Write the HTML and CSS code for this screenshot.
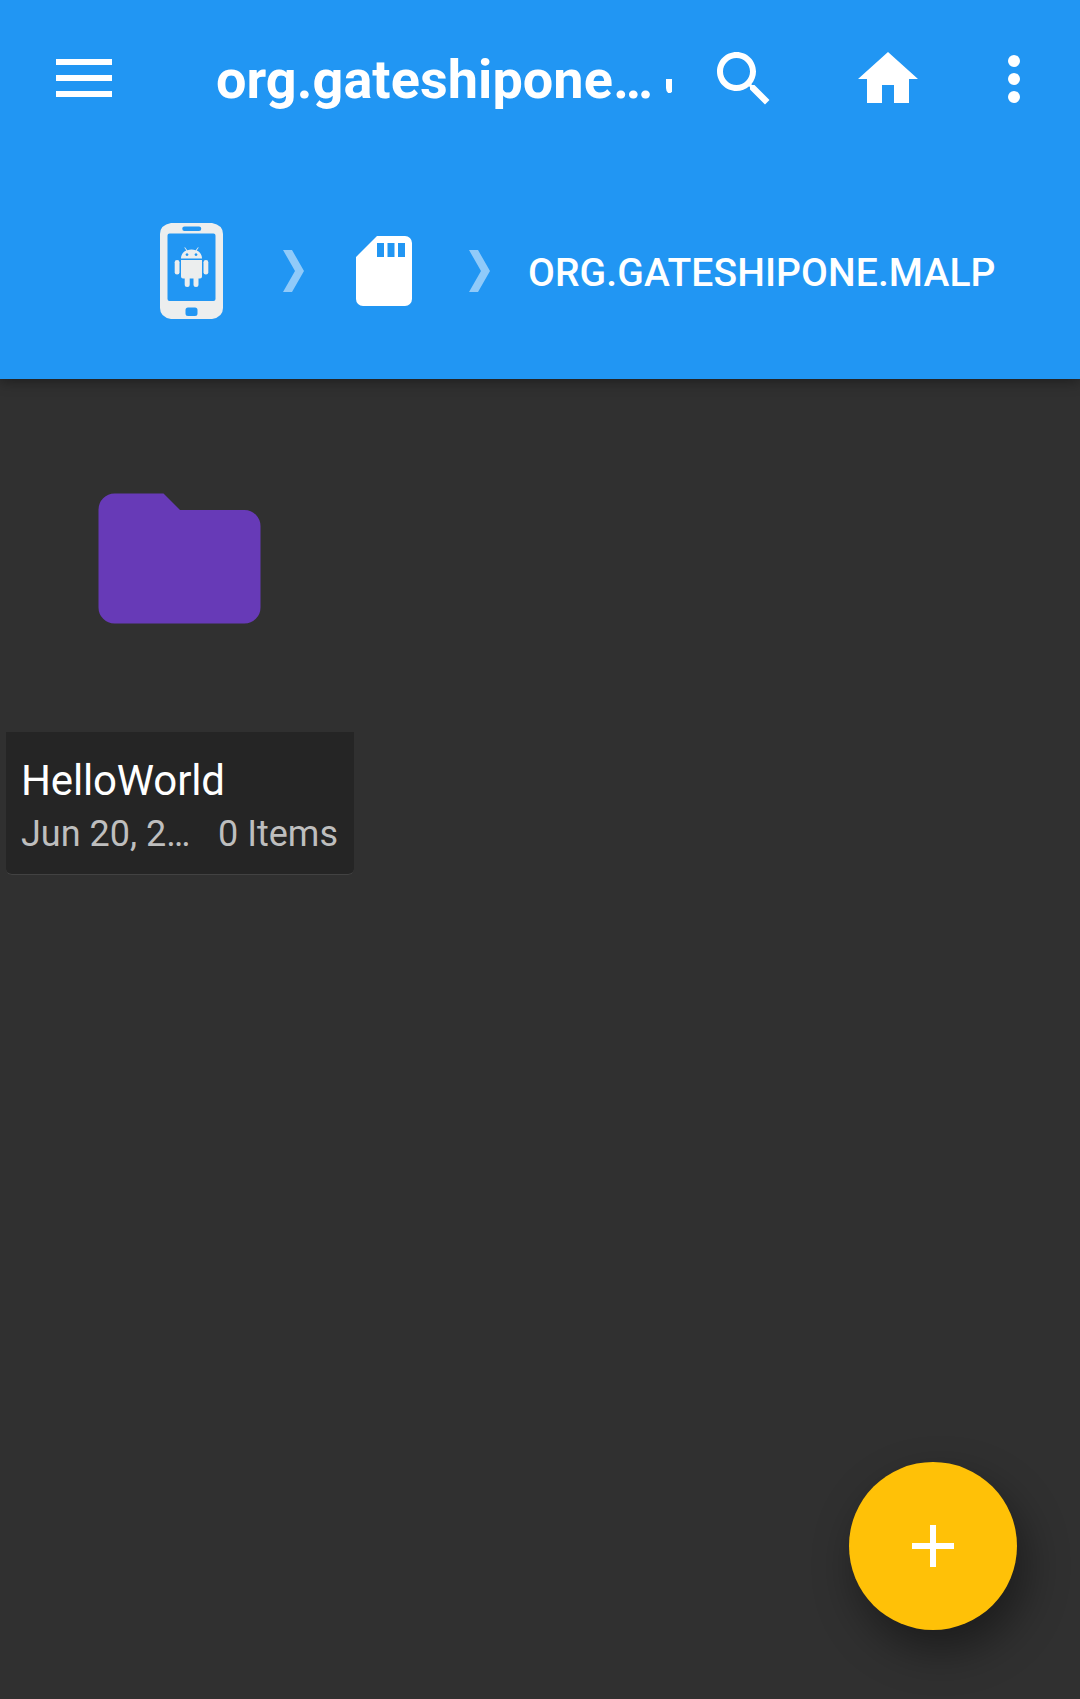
FILE: index.html
```html
<!DOCTYPE html>
<html lang="en">
<head>
<meta charset="utf-8">
<title>Files</title>
<link rel="stylesheet" href="styles.css">
</head>
<body>
<header class="appbar">
  <div class="toolbar">
    <svg class="menu" viewBox="0 0 56 38"><path d="M0 0h56v6H0zM0 16h56v6H0zM0 32h56v6H0z"/></svg>
    <h1 class="title">org.gateshipone…</h1>
    <svg class="marquee" viewBox="0 0 6 14"><path d="M0 0h6v12.500Q4.500 14.500 3 14.500Q0 13 0 9z"/></svg>
    <svg class="action search" viewBox="0 0 24 24"><path d="M15.500 14h-.79l-.28-.27C15.410 12.590 16 11.110 16 9.500 16 5.910 13.090 3 9.500 3S3 5.910 3 9.500 5.910 16 9.500 16c1.610 0 3.090-.59 4.230-1.570l.27.28v.79l5 4.990L20.490 19l-4.990-5zm-6 0C7.010 14 5 11.990 5 9.500S7.010 5 9.500 5 14 7.010 14 9.500 11.990 14 9.500 14z"/></svg>
    <svg class="action home" viewBox="0 0 24 24"><path d="M10 20v-6h4v6h5v-8h3L12 3 2 12h3v8z"/></svg>
    <svg class="action more" viewBox="0 0 24 24"><circle cx="12" cy="6" r="2"/><circle cx="12" cy="12" r="2"/><circle cx="12" cy="18" r="2"/></svg>
  </div>
  <nav class="crumbs">
    <svg class="phone" viewBox="0 0 63 96">
      <path fill-rule="evenodd" d="M11 0H52Q63 2 63 11V85Q63 94 52 96H11Q0 94 0 85V11Q0 2 11 0zM24.500 3.500a2 2 0 0 0 0 4.500h14.500a2 2 0 0 0 0-4.500zM9.500 10.500Q7.500 10.500 7.500 12.500V76Q7.500 78 9.500 78H53.500Q55.500 78 55.500 76V12.500Q55.500 10.500 53.500 10.500zM28 84.500Q25.500 84.500 25.500 87V90.500Q25.500 93 28 93H35Q37.500 93 37.500 90.500V87Q37.500 84.500 35 84.500z"/>
      <path fill-rule="evenodd" d="M21 35.500C21 31.500 23.500 28.800 26.300 27.600L24.300 24.600L25 24.200L27.300 27.200Q31.500 26 35.700 27.200L38 24.200L38.700 24.600L36.700 27.600C39.500 28.800 42 31.500 42 35.500zM27 30.200a1.400 1.400 0 1 0 .01 0zM36 30.200a1.400 1.400 0 1 0 .01 0z"/>
      <path d="M21 37H42V53.500Q42 55.500 40 55.500H38.500V61.500a2.500 2.500 0 0 1-5 0V55.500H29.700V61.500a2.500 2.500 0 0 1-5 0V55.500H23Q21 55.500 21 53.500z"/>
      <rect x="14.700" y="37" width="4.800" height="14.500" rx="2.300"/><rect x="43.500" y="37" width="4.800" height="14.500" rx="2.300"/>
    </svg>
    <svg class="chevron first" viewBox="0 0 21 42"><path d="M0 0h9l12 21L9 42H0l12-21z"/></svg>
    <svg class="sdcard" viewBox="0 0 56 70"><path fill-rule="evenodd" d="M21 0H49a7 7 0 0 1 7 7V63a7 7 0 0 1-7 7H7a7 7 0 0 1-7-7V21zM21 7v14h7V7zM31.500 7v14h7V7zM42 7v14h7V7z"/></svg>
    <svg class="chevron second" viewBox="0 0 21 42"><path d="M0 0h9l12 21L9 42H0l12-21z"/></svg>
    <span class="crumb">ORG.GATESHIPONE.MALP</span>
  </nav>
</header>
<main class="grid">
  <article class="item">
    <svg class="folder" viewBox="0 0 163 131"><path d="M16.500 .5H65.500L82 17H146.500a16 16 0 0 1 16 16V114.500a16 16 0 0 1-16 16H16.500a16 16 0 0 1-16-16V16.500a16 16 0 0 1 16-16z"/></svg>
    <div class="card">
      <div class="name">HelloWorld</div>
      <div class="meta"><span class="date">Jun 20, 2…</span><span>0 Items</span></div>
    </div>
  </article>
</main>
<button class="fab" aria-label="Add"><svg viewBox="0 0 42 42"><path d="M18 0h6v18h18v6H24v18h-6V24H0v-6h18z"/></svg></button>
</body>
</html>
```

FILE: styles.css
```css
* { box-sizing: border-box; }
body {
  margin: 0;
  height: 1699px;
  overflow: hidden;
  background: #303030;
  color: #fff;
  font-family: Roboto, sans-serif;
}
svg { display: block; flex: none; fill: #fff; }
.appbar {
  height: 379px;
  background: #2196f3;
  box-shadow: 0 3px 12px rgba(0, 0, 0, .36);
}
.toolbar {
  display: flex;
  align-items: center;
  height: 158px;
  padding-left: 56px;
}
.menu { width: 56px; height: 38px; margin-bottom: 2px; }
.title {
  width: 450px;
  margin: 2px 0 0 104px;
  font-size: 54px;
  line-height: 64px;
  font-weight: 700;
  letter-spacing: .06px;
  white-space: nowrap;
}
.marquee { width: 6px; height: 14px; margin-top: 14px; }
.action { width: 72px; height: 72px; }
.search { margin-left: 36px; }
.home { margin-left: 72px; }
.more { margin-left: 54px; }
.crumbs {
  display: flex;
  align-items: center;
  height: 226px;
  padding-left: 160px;
}
.phone { width: 63px; height: 96px; fill: #eceeee; }
.chevron { width: 21px; height: 42px; fill: #90caf9; }
.first { margin-left: 60px; }
.sdcard { width: 56px; height: 70px; margin-left: 52px; }
.second { margin-left: 57px; }
.crumb {
  margin: 4px 0 0 38px;
  font-size: 39px;
  line-height: 46px;
  font-weight: 500;
  letter-spacing: .1px;
  white-space: nowrap;
}
.grid { padding: 114px 6px 0; }
.item { width: 348px; }
.folder { width: 163px; height: 131px; margin: 0 0 108px 92px; fill: #673ab7; }
.card {
  height: 143px;
  padding: 24px 16px 0 15px;
  background: #252525;
  border-bottom: 1px solid #424242;
  border-radius: 0 0 6px 6px;
}
.name { font-size: 42px; line-height: 49px; letter-spacing: -.15px; }
.meta {
  display: flex;
  justify-content: space-between;
  margin-top: 8px;
  font-size: 36px;
  line-height: 42px;
  color: #bebebe;
  white-space: nowrap;
}
.fab {
  position: absolute;
  left: 849px;
  top: 1462px;
  display: flex;
  align-items: center;
  justify-content: center;
  width: 168px;
  height: 168px;
  padding: 0;
  border: 0;
  border-radius: 50%;
  background: #ffc107;
  box-shadow: 8px 20px 44px rgba(0, 0, 0, .42);
}
.fab svg { width: 42px; height: 42px; }
```
